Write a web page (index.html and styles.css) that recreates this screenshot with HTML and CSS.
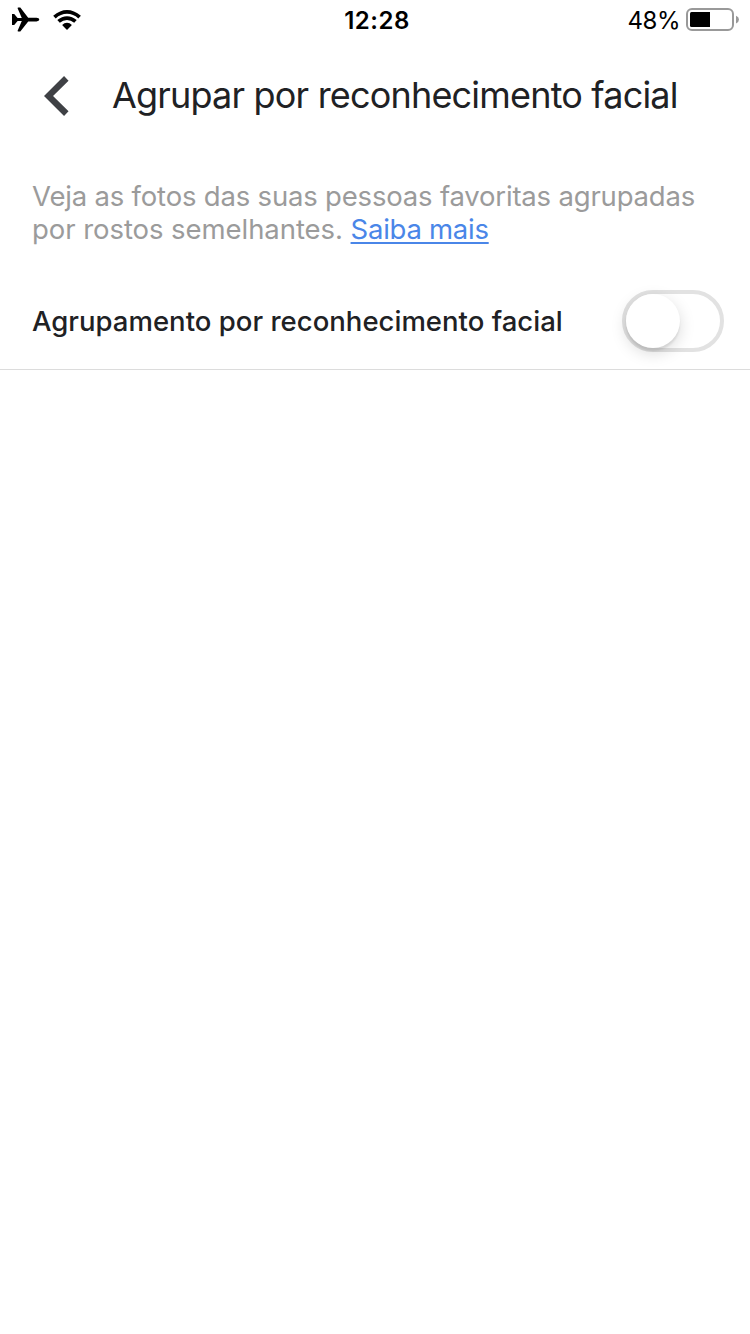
FILE: index.html
```html
<!DOCTYPE html>
<html lang="pt-BR">
<head>
<meta charset="utf-8">
<title>Agrupar por reconhecimento facial</title>
<link rel="stylesheet" href="styles.css">
</head>
<body>
<div class="status">
  <svg class="signals" width="84" height="40" viewBox="0 0 84 40">
    <path d="M12 14H14.2L17.6 18H21.8L17.6 8.2Q17.5 7.6 18.2 7.6H20.3L28.2 17.7H36.5Q39.3 18 39.3 19.5T36.5 21.4H28.2L20.3 31.4H18.2Q17.5 31.4 17.6 30.8L21.8 21H17.6L14.2 25H12Z"/>
    <path d="M53.2 15.8Q60 9.9 67 9.9T80.9 15.8L78.3 18.4Q73.3 13.8 67 13.8T55.7 18.4Z"/>
    <path d="M57.3 20.1Q61.8 16.3 67 16.3T76.7 20.1L74.2 22.7Q70.9 20 67 20T59.8 22.7Z"/>
    <path d="M62.1 24.9Q64.3 22.7 67 22.7T71.9 24.9L67.5 29.6Q67 30.1 66.5 29.6Z"/>
  </svg>
  <span class="clock">12:28</span>
  <div class="power">
    <span class="percent">48%</span>
    <svg width="54" height="24" viewBox="0 0 54 24">
      <rect x="1" y="1" width="46" height="21" rx="5" fill="#fff" stroke="#999" stroke-width="2"/>
      <path d="M5.5 4H24V19H5.5Q4 19 4 17.5V5.5Q4 4 5.5 4Z"/>
      <path d="M50 7.8Q53 9 53 11.6T50 15.4Z" fill="#999"/>
    </svg>
  </div>
</div>
<header class="header">
  <svg class="back" width="26" height="40" viewBox="0 0 26 40"><path d="M22.3 2.4L4.5 20L22.3 37.6" fill="none" stroke="#3f4145" stroke-width="6.4"/></svg>
  <h1 class="title">Agrupar por reconhecimento facial</h1>
</header>
<p class="intro"><span class="line first">Veja as fotos das suas pessoas favoritas agrupadas</span><span class="line second">por rostos semelhantes. <a class="more">Saiba mais</a></span></p>
<div class="setting">
  <span class="label">Agrupamento por reconhecimento facial</span>
  <div class="switch"><div class="knob"></div></div>
</div>
</body>
</html>
```
FILE: styles.css
```css
* { box-sizing: border-box; }
body { margin: 0; min-height: 1334px; background: #fff; color: #202124; font-family: Inter, "Liberation Sans", sans-serif; overflow: hidden; }
svg { display: block; flex: none; }
.status { display: grid; grid-template-columns: 1fr auto 1fr; height: 40px; align-items: center; color: #000; }
.clock { font-size: 24px; line-height: 38px; padding-top: 2px; font-weight: 600; letter-spacing: 0.5px; margin-left: 4px; }
.power { display: flex; justify-content: flex-end; align-items: center; gap: 6px; padding-right: 10px; }
.percent { font-size: 24px; line-height: 38px; padding-top: 2px; letter-spacing: -0.5px; }
.header { display: flex; height: 112px; align-items: center; padding-left: 44px; }
.title { margin: 0 0 2px 42px; font-size: 36px; line-height: 44px; font-weight: 400; letter-spacing: -0.81px; white-space: nowrap; }
.intro { margin: 28px 0 0 32px; font-size: 27.5px; line-height: 33px; color: #9b9b9b; white-space: nowrap; }
.line { display: block; }
.first { letter-spacing: -0.19px; }
.second { letter-spacing: -0.06px; }
.more { color: #4a86e8; letter-spacing: -0.26px; text-decoration: underline; text-decoration-thickness: 2px; text-underline-offset: 3px; text-decoration-skip-ink: none; }
.setting { display: flex; justify-content: space-between; align-items: center; height: 98px; margin-top: 26px; padding: 0 26px 0 32px; border-bottom: 1px solid #dcdcdc; }
.label { font-size: 27.5px; font-weight: 500; letter-spacing: 0.02px; white-space: nowrap; }
.switch { width: 102px; height: 62px; border: 4px solid #e2e2e2; border-radius: 31px; }
.knob { width: 54px; height: 54px; border-radius: 50%; background: #fff; box-shadow: 0 5px 16px rgba(0,0,0,.15), 0 3px 2px rgba(0,0,0,.08); }
```
